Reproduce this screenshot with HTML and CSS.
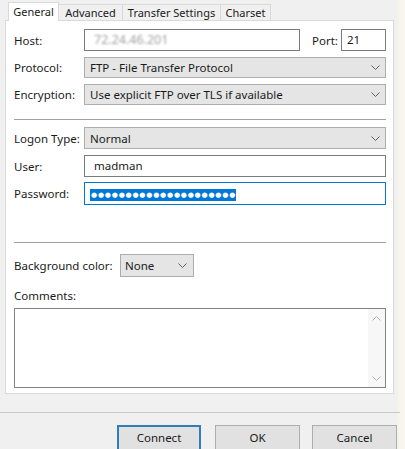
FILE: index.html
```html
<!DOCTYPE html>
<html>
<head>
<meta charset="utf-8">
<link rel="stylesheet" href="styles.css">
</head>
<body>
<div class="win">
  <div class="tabs">
    <div class="tab active">General</div>
    <div class="tab t2">Advanced</div>
    <div class="tab t3">Transfer Settings</div>
    <div class="tab t4">Charset</div>
  </div>
  <div class="panel">
    <div class="row r-host">
      <span class="lbl">Host:</span>
      <div class="input host"><span class="blur">72.24.46.201</span></div>
      <span class="port-lbl">Port:</span>
      <div class="input port">21</div>
    </div>
    <div class="row r-proto">
      <span class="lbl">Protocol:</span>
      <div class="select grow">FTP - File Transfer Protocol<svg class="chev" width="9" height="5" viewBox="0 0 9 5"><polyline points="0.5,0.5 4.5,4.5 8.5,0.5" fill="none" stroke="#606060" stroke-width="1"/></svg></div>
    </div>
    <div class="row r-enc">
      <span class="lbl">Encryption:</span>
      <div class="select grow">Use explicit FTP over TLS if available<svg class="chev" width="9" height="5" viewBox="0 0 9 5"><polyline points="0.5,0.5 4.5,4.5 8.5,0.5" fill="none" stroke="#606060" stroke-width="1"/></svg></div>
    </div>
    <div class="sep sep1"></div>
    <div class="row r-logon">
      <span class="lbl">Logon Type:</span>
      <div class="select grow">Normal<svg class="chev" width="9" height="5" viewBox="0 0 9 5"><polyline points="0.5,0.5 4.5,4.5 8.5,0.5" fill="none" stroke="#606060" stroke-width="1"/></svg></div>
    </div>
    <div class="row r-user">
      <span class="lbl">User:</span>
      <div class="input grow">madman</div>
    </div>
    <div class="row r-pass">
      <span class="lbl">Password:</span>
      <div class="input grow focus"><span class="sel">●●●●●●●●●●●●●●●●●●●●●</span></div>
    </div>
    <div class="sep sep2"></div>
    <div class="row r-bg">
      <span class="lbl bg-lbl">Background color:</span>
      <div class="select small">None<svg class="chev" width="9" height="5" viewBox="0 0 9 5"><polyline points="0.5,0.5 4.5,4.5 8.5,0.5" fill="none" stroke="#606060" stroke-width="1"/></svg></div>
    </div>
    <div class="comments-lbl">Comments:</div>
    <div class="textarea">
      <div class="sb">
        <svg width="9" height="5" viewBox="0 0 9 5"><polyline points="0.5,4.5 4.5,0.5 8.5,4.5" fill="none" stroke="#b0b0b0" stroke-width="1"/></svg>
        <svg width="9" height="5" viewBox="0 0 9 5"><polyline points="0.5,0.5 4.5,4.5 8.5,0.5" fill="none" stroke="#b0b0b0" stroke-width="1"/></svg>
      </div>
    </div>
  </div>
  <div class="bottom-sep"></div>
  <div class="buttons">
    <div class="btn default">Connect</div>
    <div class="btn">OK</div>
    <div class="btn">Cancel</div>
  </div>
</div>
</body>
</html>
```
FILE: styles.css
```css
html, body {
  margin: 0;
  padding: 0;
}
body {
  width: 405px;
  height: 449px;
  overflow: hidden;
  background: #f0f0f0;
  font-family: "Noto Sans", "Open Sans", sans-serif;
  font-size: 11.5px;
  color: #1a1a1a;
}
.win {
  width: 405px;
  height: 449px;
  background: linear-gradient(to right, #f0f0f0 0, #f0f0f0 396px, #f6f4ec 399px, #f8f6ee 405px);
}
.tabs {
  display: flex;
  padding-left: 8px;
  height: 20px;
  align-items: flex-end;
}
.tab {
  flex: none;
  white-space: nowrap;
  text-align: center;
  font-size: 11px;
  height: 16px;
  line-height: 15px;
  border: 1px solid #d9d9d9;
  border-bottom: none;
  border-left: none;
  background: #f0f0f0;
  box-sizing: border-box;
}
.tab.active {
  width: 51px;
  height: 19px;
  line-height: 18px;
  background: #ffffff;
  border-left: 1px solid #d9d9d9;
  position: relative;
  z-index: 2;
  margin-bottom: -1px;
}
.t2 { width: 64px; }
.t3 { width: 98px; }
.t4 { width: 50px; }
.panel {
  margin-left: 5px;
  width: 389px;
  height: 374px;
  box-sizing: border-box;
  background: #ffffff;
  border: 1px solid #d9d9d9;
  padding: 8px 7px 0 8px;
}
.row {
  display: flex;
  align-items: center;
}
.lbl {
  width: 70px;
  flex: none;
  white-space: nowrap;
}
.input {
  height: 22px;
  box-sizing: border-box;
  border: 1px solid #7a7a7a;
  background: #fff;
  padding: 0 0 0 9px;
  line-height: 20px;
}
.host {
  flex: none;
  width: 216px;
  overflow: hidden;
}
.blur {
  filter: blur(1.2px);
  color: #a0a0a0;
  font-size: 12.5px;
}
.port-lbl {
  flex: none;
  width: 25px;
  margin-left: 12px;
  margin-right: 4px;
  white-space: nowrap;
}
.port {
  flex: none;
  width: 45px;
  padding-left: 5px;
}
.grow {
  flex: 1;
}
.select {
  height: 21px;
  box-sizing: border-box;
  border: 1px solid #adadad;
  background: #e5e5e5;
  padding: 0 5px 0 5px;
  line-height: 19px;
  display: flex;
  align-items: center;
  justify-content: space-between;
  white-space: nowrap;
}
.chev {
  flex: none;
}
.r-proto { margin-top: 6px; }
.r-enc { margin-top: 6px; }
.sep {
  height: 1px;
  background: #a0a0a0;
}
.sep1 { margin-top: 14px; }
.r-logon { margin-top: 7px; }
.r-logon .select { height: 22px; }
.r-user { margin-top: 6px; }
.r-pass { margin-top: 5px; }
.focus {
  border-color: #0078d7;
  padding-left: 5px;
  height: 23px;
  line-height: 21px;
}
.sel {
  background: #0078d7;
  color: #ffffff;
  font-family: "DejaVu Sans", sans-serif;
  font-size: 7px;
  letter-spacing: 0.8px;
  padding: 2px 0 2px 1px;
  vertical-align: 1px;
}
.sep2 { margin-top: 37px; }
.r-bg { margin-top: 11px; }
.bg-lbl { width: 106px; }
.small {
  width: 74px;
  height: 23px;
  padding-left: 4px;
  padding-right: 6px;
}
.comments-lbl {
  margin-top: 10px;
  height: 19px;
  line-height: 17px;
}
.textarea {
  margin-top: 2px;
  height: 80px;
  box-sizing: border-box;
  border: 1px solid #828282;
  background: #fff;
  display: flex;
  justify-content: flex-end;
}
.sb {
  width: 17px;
  display: flex;
  flex-direction: column;
  justify-content: space-between;
  align-items: center;
  padding: 7px 0 6px;
  background: #f7f7f7;
}
.bottom-sep {
  margin-top: 18px;
  width: 400px;
  height: 1px;
  background: #c8c8c8;
}
.buttons {
  display: flex;
  justify-content: flex-end;
  gap: 12px;
  padding-right: 8px;
  margin-top: 12px;
}
.btn {
  width: 85px;
  height: 26px;
  box-sizing: border-box;
  border: 1px solid #adadad;
  background: #e1e1e1;
  text-align: center;
  line-height: 24px;
}
.btn.default {
  border: 2px solid #2f7fb5;
  line-height: 22px;
  width: 84px;
  margin-right: 2px;
}
```
